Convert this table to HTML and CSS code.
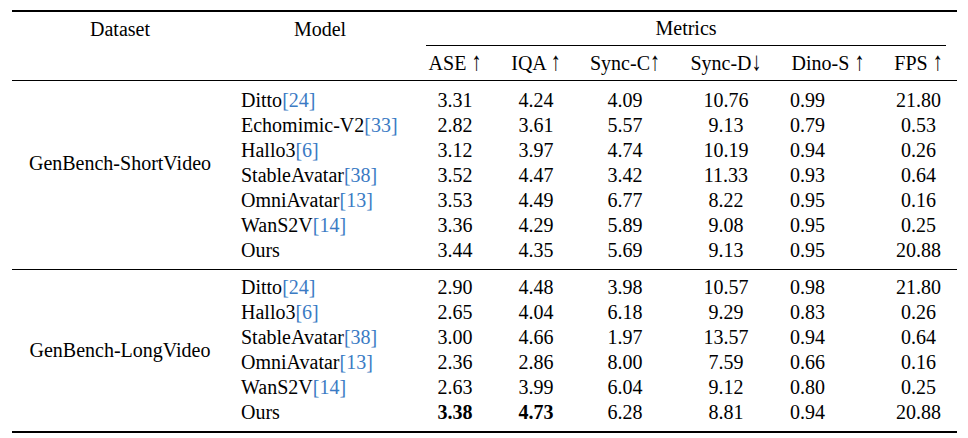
FILE: index.html
```html
<!DOCTYPE html>
<html>
<head>
<meta charset="utf-8">
<link rel="stylesheet" href="styles.css">
</head>
<body>
<table class="results">
  <colgroup>
    <col class="c-dataset">
    <col class="c-model">
    <col class="c-ase">
    <col class="c-iqa">
    <col class="c-syncc">
    <col class="c-syncd">
    <col class="c-dino">
    <col class="c-fps">
  </colgroup>
  <thead>
    <tr class="head-top">
      <th class="dataset">Dataset</th>
      <th class="model-head">Model</th>
      <th class="metrics" colspan="6"><div class="metrics-label">Metrics</div></th>
    </tr>
    <tr class="head-sub">
      <th></th>
      <th></th>
      <th>ASE <span class="arrow">↑</span></th>
      <th>IQA <span class="arrow">↑</span></th>
      <th>Sync-C<span class="arrow">↑</span></th>
      <th>Sync-D<span class="arrow down">↓</span></th>
      <th>Dino-S <span class="arrow">↑</span></th>
      <th>FPS <span class="arrow">↑</span></th>
    </tr>
  </thead>
  <tbody class="group group-short">
    <tr class="first">
      <td class="dataset" rowspan="6">GenBench-ShortVideo</td>
      <td class="model">Ditto<span class="cite">[24]</span></td>
      <td>3.31</td><td>4.24</td><td>4.09</td><td>10.76</td><td class="dino">0.99</td><td>21.80</td>
    </tr>
    <tr>
      <td class="model">Echomimic-V2<span class="cite">[33]</span></td>
      <td>2.82</td><td>3.61</td><td>5.57</td><td>9.13</td><td class="dino">0.79</td><td>0.53</td>
    </tr>
    <tr>
      <td class="model">Hallo3<span class="cite">[6]</span></td>
      <td>3.12</td><td>3.97</td><td>4.74</td><td>10.19</td><td class="dino">0.94</td><td>0.26</td>
    </tr>
    <tr>
      <td class="model">StableAvatar<span class="cite">[38]</span></td>
      <td>3.52</td><td>4.47</td><td>3.42</td><td>11.33</td><td class="dino">0.93</td><td>0.64</td>
    </tr>
    <tr>
      <td class="model">OmniAvatar<span class="cite">[13]</span></td>
      <td>3.53</td><td>4.49</td><td>6.77</td><td>8.22</td><td class="dino">0.95</td><td>0.16</td>
    </tr>
    <tr>
      <td class="model">WanS2V<span class="cite">[14]</span></td>
      <td>3.36</td><td>4.29</td><td>5.89</td><td>9.08</td><td class="dino">0.95</td><td>0.25</td>
    </tr>
    <tr class="last">
      <td></td>
      <td class="model">Ours</td>
      <td>3.44</td><td>4.35</td><td>5.69</td><td>9.13</td><td class="dino">0.95</td><td>20.88</td>
    </tr>
  </tbody>
  <tbody class="group group-long">
    <tr class="first">
      <td class="dataset" rowspan="6">GenBench-LongVideo</td>
      <td class="model">Ditto<span class="cite">[24]</span></td>
      <td>2.90</td><td>4.48</td><td>3.98</td><td>10.57</td><td class="dino">0.98</td><td>21.80</td>
    </tr>
    <tr>
      <td class="model">Hallo3<span class="cite">[6]</span></td>
      <td>2.65</td><td>4.04</td><td>6.18</td><td>9.29</td><td class="dino">0.83</td><td>0.26</td>
    </tr>
    <tr>
      <td class="model">StableAvatar<span class="cite">[38]</span></td>
      <td>3.00</td><td>4.66</td><td>1.97</td><td>13.57</td><td class="dino">0.94</td><td>0.64</td>
    </tr>
    <tr>
      <td class="model">OmniAvatar<span class="cite">[13]</span></td>
      <td>2.36</td><td>2.86</td><td>8.00</td><td>7.59</td><td class="dino">0.66</td><td>0.16</td>
    </tr>
    <tr>
      <td class="model">WanS2V<span class="cite">[14]</span></td>
      <td>2.63</td><td>3.99</td><td>6.04</td><td>9.12</td><td class="dino">0.80</td><td>0.25</td>
    </tr>
    <tr class="last">
      <td class="model">Ours</td>
      <td><b>3.38</b></td><td><b>4.73</b></td><td>6.28</td><td>8.81</td><td class="dino">0.94</td><td>20.88</td>
    </tr>
  </tbody>
</table>
</body>
</html>
```

FILE: styles.css
```css
html, body {
  margin: 0;
  padding: 0;
  background: #ffffff;
}

body {
  font-family: "Liberation Serif", "Times New Roman", serif;
  font-size: 20px;
  color: #000000;
}

.results {
  margin: 10px 0 0 12px;
  width: 945px;
  table-layout: fixed;
  border-collapse: collapse;
  border-top: 2px solid #000;
  border-bottom: 2px solid #000;
}

.c-dataset { width: 216px; }
.c-model { width: 184px; }
.c-ase { width: 86px; }
.c-iqa { width: 76px; }
.c-syncc { width: 102px; }
.c-syncd { width: 100px; }
.c-dino { width: 104px; }
.c-fps { width: 77px; }

.results th,
.results td {
  padding: 0;
  text-align: center;
  vertical-align: middle;
  white-space: nowrap;
  font-weight: normal;
  line-height: 25px;
}

.head-top th {
  height: 34px;
}

.metrics-label {
  height: 33px;
  line-height: 33px;
  margin: 0 11px 0 14px;
  border-bottom: 1px solid #000;
}

.head-sub th {
  height: 34px;
}

.arrow {
  display: inline-block;
  transform: scaleY(1.3);
  transform-origin: 50% 80%;
}

thead {
  border-bottom: 1px solid #000;
}

.group + .group {
  border-top: 1px solid #000;
}

.results td.model {
  text-align: left;
  padding-left: 13px;
}

.results td.dino {
  text-align: left;
  padding-left: 14px;
}

.cite {
  color: #3b7bc4;
}

.group-short tr.first td { padding-top: 7px; }
.group-short tr.last td { padding-bottom: 6px; }
.group-long tr.first td { padding-top: 5px; }
.group-long tr.last td { padding-bottom: 6px; }
.group-long td.dataset { padding-bottom: 6px; }

.results b {
  font-weight: bold;
}
```
